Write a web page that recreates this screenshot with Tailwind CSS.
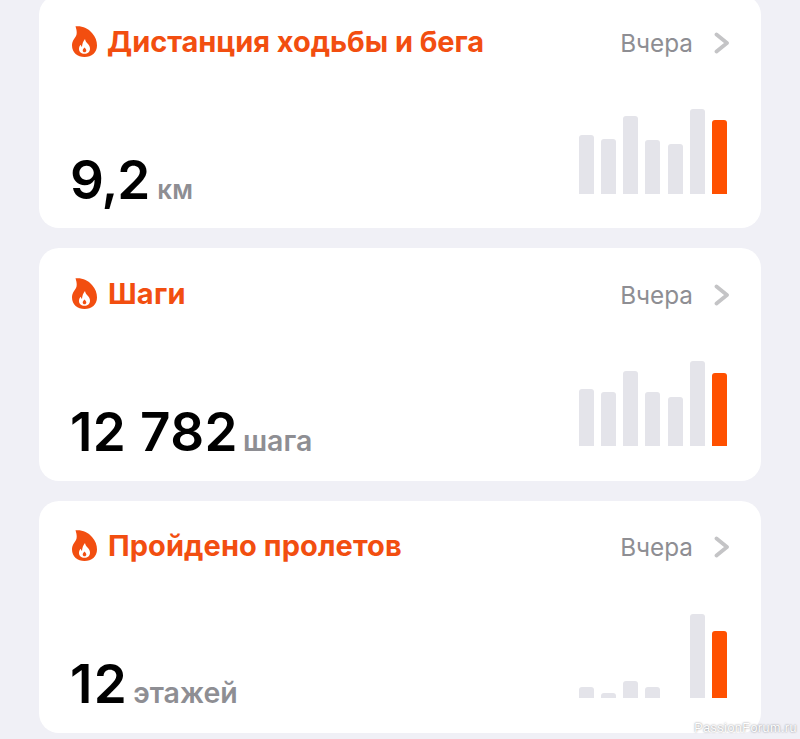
<!DOCTYPE html>
<html lang="ru">
<head>
    <meta charset="UTF-8">
    <meta name="viewport" content="width=device-width, initial-scale=1.0">
    <title>Активность</title>
    <script src="https://cdn.jsdelivr.net/npm/@tailwindcss/browser@4"></script>
</head>
<body class="bg-[#f0f0f6] h-[739px] overflow-hidden relative font-['Inter',sans-serif]">
    <main class="-mt-[5px] px-[39px] flex flex-col gap-[20px]">

        <!-- Дистанция -->
        <section class="bg-white rounded-[20px] h-[233px] pl-[33px] pr-[31px] pt-[31px] pb-[34px] flex flex-col justify-between">
            <header class="flex items-center h-[31px]">
                <svg class="w-[25px] h-[31px] mr-[10px] shrink-0" viewBox="0 0 25 31">
                    <path fill="#f24e10" d="M3.500 .3C10 -.3 16 2 20 7 23.500 11 25 15 25 19.500 25 26.500 19.500 31 12.500 31 5.500 31 0 26.500 0 19.500 0 15 2.500 12.500 4 10 5.200 8 4.800 4 3.500 .3z"/>
                    <path fill="#fff" d="M13 13c.3 2 1.200 3.200 2.500 4.500 1.700 1.700 2.500 3.300 2.500 5.200 0 3-2.300 5-5.500 5s-5.500-2-5.500-4.800c0-1.700.7-3.200 1.800-4.200.1 1 .5 1.700 1.200 2.200C10.200 18 11.200 15 13 13z"/>
                    <path fill="#f24e10" d="M12.500 21.500c1 .9 1.800 1.900 1.800 3 0 1.100-.8 1.800-1.800 1.800s-1.800-.7-1.800-1.800c0-1.100.9-2.100 1.800-3z"/>
                </svg>
                <h2 class="text-[#f24e10] text-[29px] font-bold tracking-[-0.05px] leading-none">Дистанция ходьбы и бега</h2>
                <span class="ml-auto mt-[3px] text-[#8e8e93] text-[24.300px] leading-none">Вчера</span>
                <svg class="w-[16px] h-[22px] ml-[21px] mt-[2px] shrink-0" viewBox="0 0 16 22" fill="none" stroke="#c4c4c6" stroke-width="3.800" stroke-linecap="round" stroke-linejoin="round"><path d="M2.500 2.500l10.500 8.500-10.500 8.500"/></svg>
            </header>
            <div class="flex items-end justify-between -ml-[2px]">
                <p class="flex items-baseline leading-none mb-[-13px]">
                    <span class="text-[53px] font-semibold tracking-[-1px] text-black">9,2</span>
                    <span class="ml-[8px] text-[26px] font-semibold text-[#8e8e93]">км</span>
                </p>
                <div class="flex items-end justify-between w-[148px] h-[85px] mr-[3px]">
                    <div class="w-[15px] h-[59px] bg-[#e4e4ea] rounded-t-[3px]"></div>
                    <div class="w-[15px] h-[55px] bg-[#e4e4ea] rounded-t-[3px]"></div>
                    <div class="w-[15px] h-[78px] bg-[#e4e4ea] rounded-t-[3px]"></div>
                    <div class="w-[15px] h-[54px] bg-[#e4e4ea] rounded-t-[3px]"></div>
                    <div class="w-[15px] h-[50px] bg-[#e4e4ea] rounded-t-[3px]"></div>
                    <div class="w-[15px] h-[85px] bg-[#e4e4ea] rounded-t-[3px]"></div>
                    <div class="w-[15px] h-[74px] bg-[#ff5000] rounded-t-[3px]"></div>
                </div>
            </div>
        </section>

        <!-- Шаги -->
        <section class="bg-white rounded-[20px] h-[233px] pl-[33px] pr-[31px] pt-[30px] pb-[35px] flex flex-col justify-between">
            <header class="flex items-center h-[31px]">
                <svg class="w-[25px] h-[31px] mr-[11px] shrink-0" viewBox="0 0 25 31">
                    <path fill="#f24e10" d="M3.500 .3C10 -.3 16 2 20 7 23.500 11 25 15 25 19.500 25 26.500 19.500 31 12.500 31 5.500 31 0 26.500 0 19.500 0 15 2.500 12.500 4 10 5.200 8 4.800 4 3.500 .3z"/>
                    <path fill="#fff" d="M13 13c.3 2 1.200 3.200 2.500 4.500 1.700 1.700 2.500 3.300 2.500 5.200 0 3-2.300 5-5.500 5s-5.500-2-5.500-4.800c0-1.700.7-3.200 1.800-4.200.1 1 .5 1.700 1.200 2.200C10.200 18 11.200 15 13 13z"/>
                    <path fill="#f24e10" d="M12.500 21.500c1 .9 1.800 1.900 1.800 3 0 1.100-.8 1.800-1.800 1.800s-1.800-.7-1.800-1.800c0-1.100.9-2.100 1.800-3z"/>
                </svg>
                <h2 class="text-[#f24e10] text-[29px] font-bold tracking-[0.2px] leading-none">Шаги</h2>
                <span class="ml-auto mt-[3px] text-[#8e8e93] text-[24.300px] leading-none">Вчера</span>
                <svg class="w-[16px] h-[22px] ml-[21px] mt-[2px] shrink-0" viewBox="0 0 16 22" fill="none" stroke="#c4c4c6" stroke-width="3.800" stroke-linecap="round" stroke-linejoin="round"><path d="M2.500 2.500l10.500 8.500-10.500 8.500"/></svg>
            </header>
            <div class="flex items-end justify-between -ml-[2px]">
                <p class="flex items-baseline leading-none mb-[-13px]">
                    <span class="text-[53px] font-semibold tracking-[0.4px] text-black">12 782</span>
                    <span class="ml-[5px] text-[28.500px] font-semibold text-[#8e8e93]">шага</span>
                </p>
                <div class="flex items-end justify-between w-[148px] h-[85px] mr-[3px]">
                    <div class="w-[15px] h-[57px] bg-[#e4e4ea] rounded-t-[3px]"></div>
                    <div class="w-[15px] h-[54px] bg-[#e4e4ea] rounded-t-[3px]"></div>
                    <div class="w-[15px] h-[75px] bg-[#e4e4ea] rounded-t-[3px]"></div>
                    <div class="w-[15px] h-[54px] bg-[#e4e4ea] rounded-t-[3px]"></div>
                    <div class="w-[15px] h-[49px] bg-[#e4e4ea] rounded-t-[3px]"></div>
                    <div class="w-[15px] h-[85px] bg-[#e4e4ea] rounded-t-[3px]"></div>
                    <div class="w-[15px] h-[73px] bg-[#ff5000] rounded-t-[3px]"></div>
                </div>
            </div>
        </section>

        <!-- Пролеты -->
        <section class="bg-white rounded-[20px] h-[232px] pl-[33px] pr-[31px] pt-[29px] pb-[35px] flex flex-col justify-between">
            <header class="flex items-center h-[31px]">
                <svg class="w-[25px] h-[31px] mr-[11px] shrink-0" viewBox="0 0 25 31">
                    <path fill="#f24e10" d="M3.500 .3C10 -.3 16 2 20 7 23.500 11 25 15 25 19.500 25 26.500 19.500 31 12.500 31 5.500 31 0 26.500 0 19.500 0 15 2.500 12.500 4 10 5.200 8 4.800 4 3.500 .3z"/>
                    <path fill="#fff" d="M13 13c.3 2 1.200 3.200 2.500 4.500 1.700 1.700 2.500 3.300 2.500 5.200 0 3-2.300 5-5.500 5s-5.500-2-5.500-4.800c0-1.700.7-3.200 1.800-4.200.1 1 .5 1.700 1.200 2.200C10.200 18 11.200 15 13 13z"/>
                    <path fill="#f24e10" d="M12.500 21.500c1 .9 1.800 1.900 1.800 3 0 1.100-.8 1.800-1.800 1.800s-1.800-.7-1.800-1.800c0-1.100.9-2.100 1.800-3z"/>
                </svg>
                <h2 class="text-[#f24e10] text-[29px] font-bold tracking-[0.08px] leading-none">Пройдено пролетов</h2>
                <span class="ml-auto mt-[3px] text-[#8e8e93] text-[24.300px] leading-none">Вчера</span>
                <svg class="w-[16px] h-[22px] ml-[21px] mt-[2px] shrink-0" viewBox="0 0 16 22" fill="none" stroke="#c4c4c6" stroke-width="3.800" stroke-linecap="round" stroke-linejoin="round"><path d="M2.500 2.500l10.500 8.500-10.500 8.500"/></svg>
            </header>
            <div class="flex items-end justify-between -ml-[2px]">
                <p class="flex items-baseline leading-none mb-[-13px]">
                    <span class="text-[53px] font-semibold tracking-[1.400px] text-black">12</span>
                    <span class="ml-[5px] text-[28.500px] font-semibold text-[#8e8e93]">этажей</span>
                </p>
                <div class="flex items-end justify-between w-[148px] h-[85px] mr-[3px]">
                    <div class="w-[15px] h-[11px] bg-[#e4e4ea] rounded-t-[3px]"></div>
                    <div class="w-[15px] h-[5px] bg-[#e4e4ea] rounded-t-[3px]"></div>
                    <div class="w-[15px] h-[17px] bg-[#e4e4ea] rounded-t-[3px]"></div>
                    <div class="w-[15px] h-[11px] bg-[#e4e4ea] rounded-t-[3px]"></div>
                    <div class="w-[15px] h-0"></div>
                    <div class="w-[15px] h-[84px] bg-[#e4e4ea] rounded-t-[3px]"></div>
                    <div class="w-[15px] h-[67px] bg-[#ff5000] rounded-t-[3px]"></div>
                </div>
            </div>
        </section>
    </main>

    <!-- watermark -->
    <span class="absolute right-[3px] bottom-[5px] text-[12.500px] tracking-[0.5px] leading-none text-white [text-shadow:0_0_2px_#6f6f75] font-['Liberation_Sans',sans-serif]">PassionForum.ru</span>
</body>
</html>
